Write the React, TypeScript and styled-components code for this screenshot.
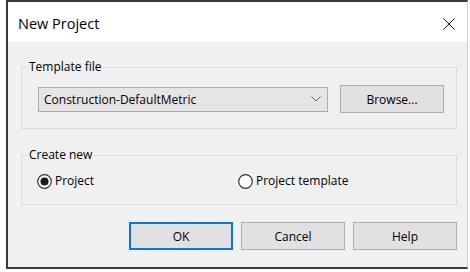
import styled, { createGlobalStyle } from "styled-components";

const GlobalStyle = createGlobalStyle`
  html, body {
    margin: 0;
    padding: 0;
    background: #ffffff;
  }

  body {
    font-family: "Open Sans", "Noto Sans", Arial, sans-serif;
    color: #000000;
  }
`;

export const DialogWindow = styled.div`
  box-sizing: border-box;
  margin-left: 6px;
  width: 462px;
  height: 269px;
  display: flex;
  flex-direction: column;
  border-top: 2px solid #3a3a3a;
  border-left: 2px solid #3a3a3a;
  border-bottom: 2px solid #3a3a3a;
  border-right: 1px solid #cfcfcf;
  background: #f0f0f0;
`;

export const DialogTitleBar = styled.div`
  box-sizing: border-box;
  height: 40px;
  display: flex;
  align-items: center;
  justify-content: space-between;
  padding: 3px 0 0 10px;
  background: #ffffff;
`;

export const DialogTitle = styled.span`
  font-size: 14.5px;
  line-height: 20px;
  color: #000000;
`;

export const DialogClose = styled.button`
  width: 37px;
  height: 30px;
  display: flex;
  align-items: center;
  justify-content: center;
  border: 0;
  padding: 0;
  background: transparent;
`;

export const DialogBody = styled.div`
  flex: 1;
  display: flex;
  flex-direction: column;
  padding: 18px 10px 0 13px;
`;

export const GroupBox = styled.fieldset<{ $gap?: number }>`
  margin: ${(p) => p.$gap ?? 0}px 0 0 0;
  padding: 11px 12px 15px 15px;
  min-width: 0;
  border: 1px solid #dcdcdc;
`;

export const GroupLabel = styled.legend`
  margin-left: -10px;
  padding: 0 2px;
  font-size: 12px;
  line-height: 14px;
`;

export const TemplateRow = styled.div`
  display: flex;
  align-items: center;
  gap: 12px;
  padding-left: 1px;
`;

export const ComboBox = styled.div`
  box-sizing: border-box;
  flex: 1;
  height: 25px;
  display: flex;
  align-items: center;
  justify-content: space-between;
  padding: 0 6px 0 5px;
  background: #e5e5e5;
  border: 1px solid #acacac;
  font-size: 12px;
`;

export const Button = styled.button<{ $primary?: boolean }>`
  box-sizing: border-box;
  width: 104px;
  height: 28px;
  padding: 0;
  font-family: inherit;
  font-size: 12px;
  color: #000000;
  background: #e1e1e1;
  border: ${(p) => (p.$primary ? "2px solid #0078d7" : "1px solid #adadad")};
`;

export const RadioRow = styled.div`
  display: grid;
  grid-template-columns: 201px auto;
  align-items: center;
  height: 16px;
`;

export const RadioOption = styled.label`
  display: flex;
  align-items: center;
  gap: 3px;
  font-size: 12px;
  line-height: 16px;
`;

export const ButtonRow = styled.div`
  display: flex;
  justify-content: flex-end;
  gap: 8px;
  margin-top: 17px;
`;

const RadioMark = ({ checked }: { checked?: boolean }) => (
  <svg width="15" height="15" viewBox="0 0 15 15">
    <circle cx="7.5" cy="7.5" r="6.8" fill="#ffffff" stroke="#333333" strokeWidth="1.2" />
    {checked && <circle cx="7.5" cy="7.5" r="4" fill="#1b1b1b" />}
  </svg>
);

const Chevron = () => (
  <svg width="10" height="6" viewBox="0 0 10 6">
    <path d="M0.5 0.5 L5 5 L9.5 0.5" fill="none" stroke="#606060" strokeWidth="1" />
  </svg>
);

const CloseIcon = () => (
  <svg width="12" height="12" viewBox="0 0 12 12">
    <path d="M0.5 0.5 L11.5 11.5 M11.5 0.5 L0.5 11.5" stroke="#1a1a1a" strokeWidth="1" />
  </svg>
);

export default function App() {
  return (
    <>
      <GlobalStyle />
      <DialogWindow>
        <DialogTitleBar>
          <DialogTitle>New Project</DialogTitle>
          <DialogClose aria-label="Close">
            <CloseIcon />
          </DialogClose>
        </DialogTitleBar>
        <DialogBody>
          <GroupBox>
            <GroupLabel>Template file</GroupLabel>
            <TemplateRow>
              <ComboBox>
                <span>Construction-DefaultMetric</span>
                <Chevron />
              </ComboBox>
              <Button>Browse...</Button>
            </TemplateRow>
          </GroupBox>
          <GroupBox $gap={19}>
            <GroupLabel>Create new</GroupLabel>
            <RadioRow>
              <RadioOption>
                <RadioMark checked />
                Project
              </RadioOption>
              <RadioOption>
                <RadioMark />
                Project template
              </RadioOption>
            </RadioRow>
          </GroupBox>
          <ButtonRow>
            <Button $primary>OK</Button>
            <Button>Cancel</Button>
            <Button>Help</Button>
          </ButtonRow>
        </DialogBody>
      </DialogWindow>
    </>
  );
}
